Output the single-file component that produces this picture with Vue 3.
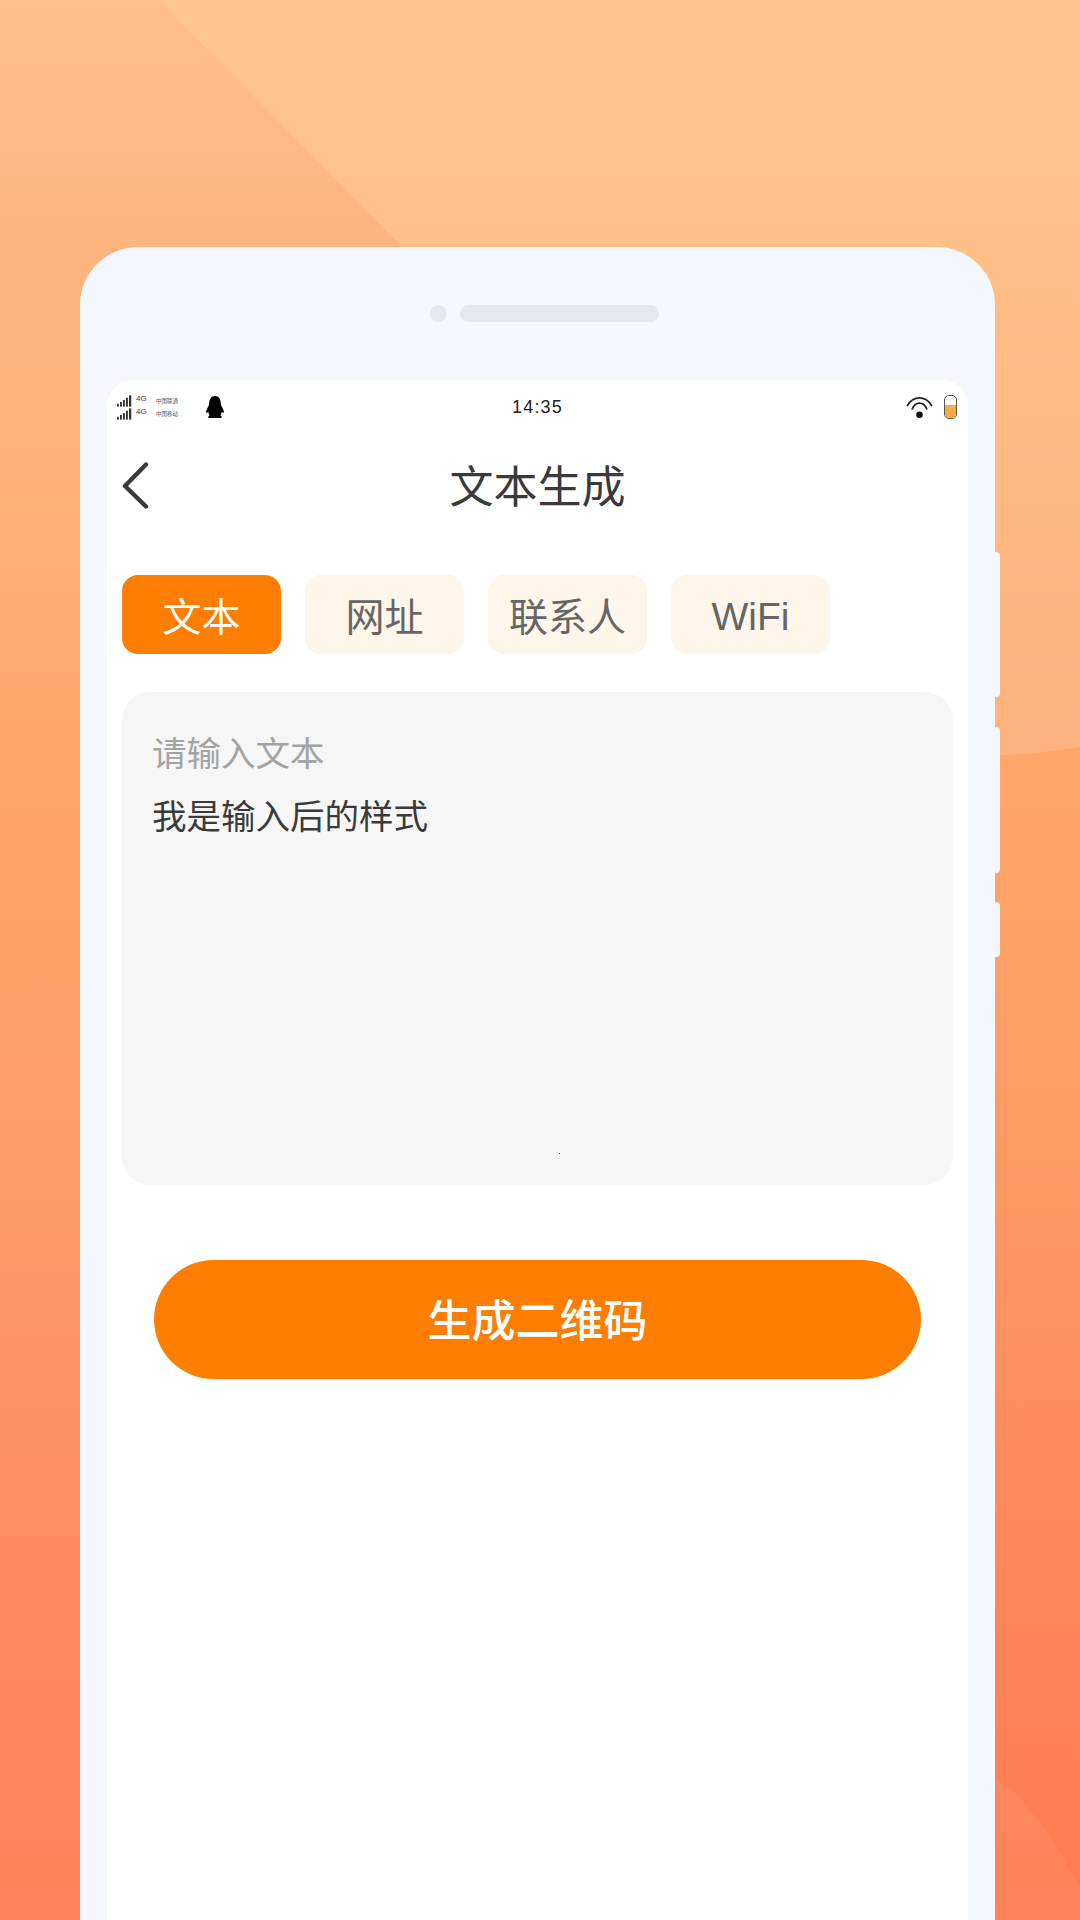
<script setup>
import { ref } from 'vue'

const tabs = ['文本', '网址', '联系人', 'WiFi']
const activeTab = ref(0)
</script>

<template>
  <div class="page">
    <svg class="page__bg" viewBox="0 0 1080 1920" preserveAspectRatio="none" aria-hidden="true">
      <defs>
        <linearGradient id="bg-base" x1="0" y1="0" x2="0" y2="1">
          <stop offset="0" stop-color="#ffc78f" />
          <stop offset="0.13" stop-color="#ffc088" />
          <stop offset="0.39" stop-color="#ffa669" />
          <stop offset="0.52" stop-color="#ffa166" />
          <stop offset="0.75" stop-color="#ff8c5c" />
          <stop offset="1" stop-color="#ff7c50" />
        </linearGradient>
        <linearGradient id="bg-corner" gradientUnits="userSpaceOnUse" x1="0" y1="0" x2="0" y2="700">
          <stop offset="0" stop-color="#ff9a68" stop-opacity="0.14" />
          <stop offset="0.36" stop-color="#ff9a68" stop-opacity="0.32" />
          <stop offset="1" stop-color="#ff9a68" stop-opacity="0" />
        </linearGradient>
        <linearGradient id="bg-light" gradientUnits="userSpaceOnUse" x1="0" y1="300" x2="0" y2="750">
          <stop offset="0" stop-color="#ffffff" stop-opacity="0" />
          <stop offset="1" stop-color="#ffffff" stop-opacity="0.14" />
        </linearGradient>
      </defs>
      <rect width="1080" height="1920" fill="url(#bg-base)" />
      <path d="M0 0H159L410 255V700H0Z" fill="url(#bg-corner)" />
      <path d="M540 300H1080V747C1050 752 1020 755 990 755L540 600Z" fill="url(#bg-light)" />
      <path d="M0 998C30 988 60 982 90 978L995 1778C1030 1800 1060 1850 1080 1888V1920H0Z" fill="#ffa080" opacity="0.2" />
    </svg>

    <div class="phone">
      <span class="phone__key phone__key--power"></span>
      <span class="phone__key phone__key--up"></span>
      <span class="phone__key phone__key--down"></span>

      <div class="phone__top">
        <span class="phone__camera"></span>
        <span class="phone__speaker"></span>
      </div>

      <div class="screen">
        <div class="status">
          <div class="status__left">
            <div class="status__signals">
              <div v-for="carrier in ['中国联通', '中国移动']" :key="carrier" class="status__line">
                <svg class="status__bars" viewBox="0 0 16 12" aria-hidden="true">
                  <rect x="0" y="9" width="2" height="3" />
                  <rect x="3.2" y="7" width="2" height="5" />
                  <rect x="6.4" y="5" width="2" height="7" />
                  <rect x="9.6" y="2.5" width="2" height="9.5" />
                  <rect x="12.8" y="0" width="2.4" height="12" />
                </svg>
                <span class="status__net">4G</span>
                <span class="status__carrier">{{ carrier }}</span>
              </div>
            </div>
            <svg class="status__qq" viewBox="0 0 20 22" aria-hidden="true">
              <path d="M10 0C6 0 4.5 3 4.2 7C4 10 2.8 11 1.8 13.5C1 15.5 0.8 16.6 1.5 16.8C2.2 17 2.8 16.4 3.2 15.8C3.5 17.4 4 18.6 4.6 19.5L3.4 20.2V22H16.6V20.2L15.4 19.5C16 18.6 16.5 17.4 16.8 15.8C17.2 16.4 17.8 17 18.5 16.8C19.2 16.6 19 15.5 18.2 13.5C17.2 11 16 10 15.8 7C15.5 3 14 0 10 0Z" />
            </svg>
          </div>
          <span class="status__time">14:35</span>
          <div class="status__right">
            <svg class="status__wifi" viewBox="0 0 28 24" fill="none" stroke="#222" stroke-width="1.8" stroke-linecap="round" aria-hidden="true">
              <path d="M1.5 10.5C8 0 20 0 26.5 10.5" />
              <path d="M6.5 14C10 6 18 6 21.5 14" />
              <circle cx="14" cy="20" r="3.4" fill="#111" stroke="none" />
            </svg>
            <span class="status__battery"><span class="status__level"></span></span>
          </div>
        </div>

        <header class="nav">
          <svg class="nav__back" viewBox="0 0 30 50" fill="none" stroke="#3a3a3a" stroke-width="4.4" stroke-linecap="round" stroke-linejoin="round" aria-hidden="true">
            <path d="M24 2.5L3 24L24 44.5" />
          </svg>
          <h1 class="nav__title">文本生成</h1>
        </header>

        <div class="tabs">
          <button
            v-for="(tab, index) in tabs"
            :key="tab"
            type="button"
            :class="['tabs__item', { 'tabs__item--active': index === activeTab, 'tabs__item--latin': tab === 'WiFi' }]"
            @click="activeTab = index"
          >
            {{ tab }}
          </button>
        </div>

        <div class="editor">
          <p class="editor__hint">请输入文本</p>
          <p class="editor__value">我是输入后的样式</p>
          <span class="editor__mark"></span>
        </div>

        <button type="button" class="submit">生成二维码</button>
      </div>
    </div>
  </div>
</template>

<style>
html,
body {
  margin: 0;
  padding: 0;
}
</style>

<style scoped>
.page {
  position: relative;
  width: 1080px;
  height: 1920px;
  overflow: hidden;
  padding: 247px 85px 0 80px;
  box-sizing: border-box;
  font-family: "Liberation Sans", "Noto Sans CJK SC", sans-serif;
}

.page__bg {
  position: absolute;
  inset: 0;
  width: 100%;
  height: 100%;
}

.phone {
  position: relative;
  width: 915px;
  height: 1760px;
  box-sizing: border-box;
  padding: 0 27px;
  border-radius: 58px 58px 0 0;
  background: #f4f7fe;
}

.phone__key {
  position: absolute;
  left: 100%;
  width: 5px;
  background: #f4f7fe;
  border-radius: 0 4px 4px 0;
}

.phone__key--power {
  top: 305px;
  height: 145px;
}

.phone__key--up {
  top: 480px;
  height: 146px;
}

.phone__key--down {
  top: 655px;
  height: 55px;
}

.phone__top {
  display: flex;
  align-items: center;
  justify-content: center;
  gap: 13px;
  height: 133px;
  padding-left: 13px;
  box-sizing: border-box;
}

.phone__camera {
  width: 17px;
  height: 17px;
  border-radius: 50%;
  background: #e5e8ef;
}

.phone__speaker {
  width: 199px;
  height: 17px;
  border-radius: 9px;
  background: #e5e8ef;
}

.screen {
  display: flex;
  flex-direction: column;
  height: 1627px;
  padding: 0 15px;
  box-sizing: border-box;
  border-radius: 26px 26px 0 0;
  background: #ffffff;
}

.status {
  position: relative;
  display: flex;
  align-items: center;
  justify-content: space-between;
  height: 54px;
  margin: 0 -5px 0 -5px;
}

.status__left {
  display: flex;
  align-items: center;
  gap: 27px;
}

.status__signals {
  display: flex;
  flex-direction: column;
  gap: 0;
}

.status__line {
  display: flex;
  align-items: center;
  height: 13px;
}

.status__bars {
  width: 15px;
  height: 12px;
  fill: #333;
}

.status__net {
  width: 20px;
  margin-left: 4px;
  margin-top: -4px;
  font-size: 8px;
  color: #444;
}

.status__carrier {
  font-size: 5.5px;
  color: #555;
}

.status__qq {
  width: 20px;
  height: 22px;
  fill: #000;
}

.status__time {
  position: absolute;
  left: 50%;
  transform: translateX(-50%);
  font-size: 18px;
  letter-spacing: 1.2px;
  color: #222;
}

.status__right {
  display: flex;
  align-items: center;
  gap: 11px;
  padding-right: 1px;
}

.status__wifi {
  width: 27px;
  height: 24px;
}

.status__battery {
  display: flex;
  align-items: flex-end;
  width: 13px;
  height: 24px;
  box-sizing: border-box;
  border: 1.5px solid #555;
  border-radius: 5px;
  overflow: hidden;
}

.status__level {
  width: 100%;
  height: 60%;
  background: #f5ab45;
}

.nav {
  position: relative;
  display: flex;
  align-items: center;
  justify-content: center;
  height: 80px;
  margin-top: 10px;
  margin-bottom: 51px;
}

.nav__back {
  position: absolute;
  left: 0;
  top: 18px;
  width: 30px;
  height: 50px;
}

.nav__title {
  margin: 0;
  font-size: 44px;
  font-weight: 400;
  color: #3a3a3a;
}

.tabs {
  display: flex;
  gap: 24px;
  margin-bottom: 38px;
}

.tabs__item {
  width: 159px;
  height: 79px;
  padding: 0 0 2px;
  border: 0;
  border-radius: 16px;
  background: #fef5eb;
  color: #666666;
  font-family: inherit;
  font-size: 39px;
}

.tabs__item--latin {
  padding: 5px 0 0;
}

.tabs__item--active {
  background: #ff7d00;
  color: #ffffff;
}

.editor {
  position: relative;
  height: 493px;
  padding: 39px 30px;
  box-sizing: border-box;
  border-radius: 28px;
  background: #f6f6f6;
  font-size: 34.5px;
}

.editor__hint {
  margin: 0 0 17px;
  line-height: 46px;
  color: #a3a3a3;
}

.editor__value {
  margin: 0;
  line-height: 46px;
  color: #3a3a3a;
}

.editor__mark {
  position: absolute;
  left: 437px;
  top: 461px;
  width: 1px;
  height: 1px;
  background: #555555;
}

.submit {
  align-self: center;
  width: 767px;
  height: 119px;
  margin-top: 75px;
  padding: 0 0 4px;
  border: 0;
  border-radius: 60px;
  background: #ff7d00;
  color: #ffffff;
  font-family: inherit;
  font-size: 44px;
  font-weight: 500;
}
</style>
